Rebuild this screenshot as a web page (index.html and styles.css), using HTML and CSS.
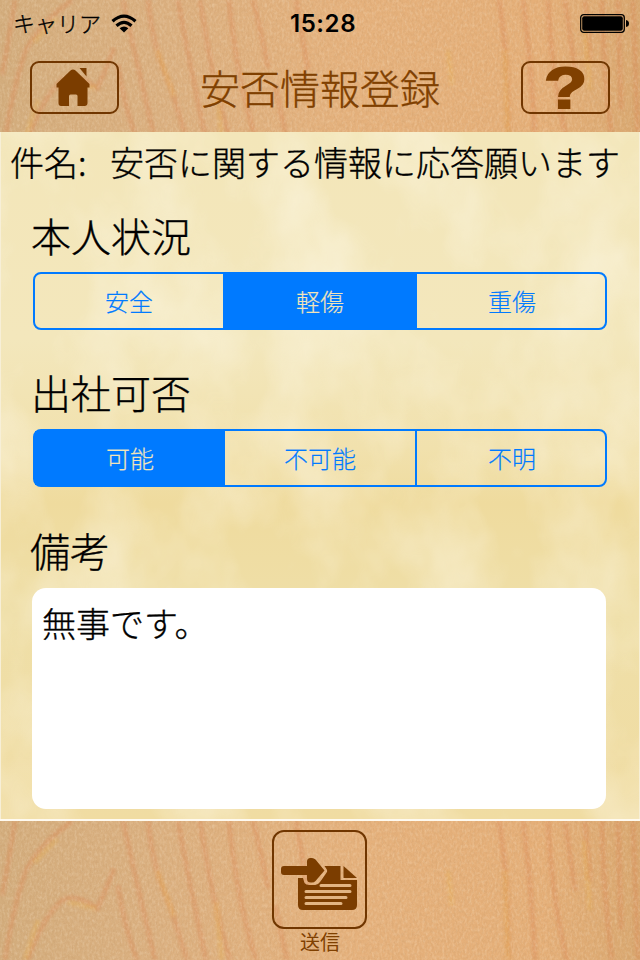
FILE: index.html
```
<!DOCTYPE html>
<html lang="ja">
  <head>
    <meta charset="UTF-8">
    <meta name="viewport" content="width=device-width, initial-scale=1.0">
    <title>安否情報登録</title>
    <link rel="stylesheet" href="styles.css">
  </head>
  <body>
    <!-- shared wood and paper textures -->
    <svg class="defs" width="0" height="0" aria-hidden="true">
      <defs>
        <linearGradient id="wood-base">
          <stop offset="0" stop-color="#d3ad7d"/>
          <stop offset="0.25" stop-color="#dbb080"/>
          <stop offset="0.55" stop-color="#e5b17c"/>
          <stop offset="0.85" stop-color="#e5af78"/>
          <stop offset="1" stop-color="#d9a870"/>
        </linearGradient>
        <filter id="soft" x="-5%" y="-5%" width="110%" height="110%">
          <feGaussianBlur stdDeviation="1.8"/>
        </filter>
        <filter id="wood-noise" x="0" y="0" width="100%" height="100%">
          <feTurbulence type="fractalNoise" baseFrequency="0.5 0.3" numOctaves="3" seed="4"/>
          <feColorMatrix values="0 0 0 0 0.5  0 0 0 0 0.28  0 0 0 0 0.12  1.5 0 0 0 -0.6"/>
        </filter>
        <filter id="wood-light" x="0" y="0" width="100%" height="100%">
          <feTurbulence type="fractalNoise" baseFrequency="0.4 0.25" numOctaves="3" seed="19"/>
          <feColorMatrix values="0 0 0 0 1  0 0 0 0 0.88  0 0 0 0 0.7  1.8 0 0 0 -0.75"/>
        </filter>
        <filter id="paper-light" x="0" y="0" width="100%" height="100%">
          <feTurbulence type="fractalNoise" baseFrequency="0.011 0.008" numOctaves="4" seed="31"/>
          <feColorMatrix values="0 0 0 0 1  0 0 0 0 0.97  0 0 0 0 0.88  2 0 0 0 -0.8"/>
        </filter>
        <symbol id="wood" viewBox="0 0 640 140">
          <rect width="640" height="140" fill="url(#wood-base)"/>
          <g fill="none" stroke="#da8a58" stroke-width="5" opacity="0.42" filter="url(#soft)">
            <path d="M15 0Q9 40 2 75M72 0Q38 25 25 52Q12 92 5 140"/>
            <path d="M114 48Q104 75 97 88Q75 72 62 80Q42 98 28 140"/>
            <path d="M118 65Q124 105 137 140M123 0Q135 55 155 140"/>
            <path d="M148 0Q153 50 170 85L187 140M178 0Q187 50 206 140"/>
            <path d="M200 0Q212 80 230 140M229 0Q236 75 256 140"/>
            <path d="M253 0Q263 40 268 68M275 85L287 140M296 0L308 70"/>
            <path d="M499 0Q509 60 508 140M523 0Q532 70 535 140"/>
            <path d="M548 0Q552 80 567 140M565 0L575 70M585 0L590 60"/>
            <path d="M602 0Q603 70 612 140M618 0L621 110M633 0L638 140"/>
          </g>
          <g fill="none" stroke="#e6b05a" stroke-width="5" opacity="0.4" filter="url(#soft)">
            <path d="M57 18L34 42M68 82L96 88M38 100L25 140M157 50L174 96"/>
            <path d="M216 82L222 140M505 50L508 140M584 20L590 90M448 50L452 85"/>
          </g>
          <rect width="640" height="140" filter="url(#wood-noise)" opacity="0.32"/>
          <rect width="640" height="140" filter="url(#wood-light)" opacity="0.28"/>
        </symbol>
      </defs>
    </svg>

    <header class="wood-bar top-bar">
      <svg class="texture" viewBox="0 0 640 132" preserveAspectRatio="none" aria-hidden="true">
        <use href="#wood" width="640" height="140"/>
      </svg>
      <div class="status">
        <div class="carrier">
          <span>キャリア</span>
          <svg width="26" height="20" viewBox="0 0 26 20" fill="none" stroke="#000" stroke-width="3.2">
            <path d="M1.500 7.2Q13-3 24.500 7.2"/>
            <path d="M5.500 11.8Q13 5 20.500 11.8"/>
            <path d="M13 18.5L8.6 14.3Q13 10.7 17.4 14.3Z" fill="#000" stroke="none"/>
          </svg>
        </div>
        <div class="time">15:28</div>
        <svg class="battery" width="50" height="20" viewBox="0 0 50 20">
          <rect x="0.7" y="0.7" width="43.6" height="17.6" rx="3" fill="none" stroke="#000" stroke-width="1.3"/>
          <rect x="2.2" y="2.2" width="40.6" height="14.6" rx="2"/>
          <path d="M46 6Q49 6.5 49 9.5Q49 12.5 46 13Z"/>
        </svg>
      </div>
      <div class="nav">
        <button class="nav-button home" aria-label="ホーム">
          <svg width="36" height="40" viewBox="0 0 36 40" fill="#7b3d00">
            <path d="M15.500 3.500Q18 1.500 20.500 3.500L34.500 17V20.500H32.500V36Q32.500 39 29.500 39H22.500V29Q22.500 27.500 21 27.500H15.500Q14 27.500 14 29V39H6Q3.500 39 3.500 36V20.500H1.500V17Z"/>
            <path d="M24.500 1H31.500V9.500Z"/>
          </svg>
        </button>
        <h1>安否情報登録</h1>
        <button class="nav-button"><span class="question">?</span></button>
      </div>
    </header>

    <main>
      <svg class="texture" viewBox="0 0 640 687" preserveAspectRatio="none" aria-hidden="true">
        <rect width="640" height="687" filter="url(#paper-light)" opacity="0.5"/>
      </svg>
      <div class="subject">
        <span class="subject-label">件名:</span>
        <span>安否に関する情報に応答願います</span>
      </div>

      <h2>本人状況</h2>
      <div class="segments status-segments">
        <button>安全</button>
        <button class="selected">軽傷</button>
        <button>重傷</button>
      </div>

      <h2>出社可否</h2>
      <div class="segments">
        <button class="selected">可能</button>
        <button>不可能</button>
        <button>不明</button>
      </div>

      <h2 class="note-title">備考</h2>
      <div class="note">無事です。</div>
    </main>

    <footer class="wood-bar bottom-bar">
      <svg class="texture" viewBox="0 0 640 140" preserveAspectRatio="none" aria-hidden="true">
        <use href="#wood" width="640" height="140"/>
      </svg>
      <button class="send" aria-label="送信">
        <svg width="78" height="54" viewBox="0 0 78 54" fill="#7b3d00">
          <path d="M17 21H22L23.500 26Q25 28 28 28H34Q37 28 39 25L45 16.500Q47 14 45.500 12L43.500 9H59.500V23H76V48Q76 53 71 53H22Q17 53 17 48Z"/>
          <path d="M62.500 9L76 21H62.500Z"/>
          <path d="M3 9H26V4.500Q26 1 29.500 1H31Q33 1 34.500 2.500L43.500 13.500L34.500 24Q33 25.500 31 25.500H30Q26 25.500 26 22V18H3Q0 18 0 15V12Q0 9 3 9Z"/>
          <path d="M40 28.500H69M25 34.500H69M25 40.500H65M25 46.500H60" fill="none" stroke="#e2b583" stroke-width="3" stroke-linecap="round"/>
        </svg>
      </button>
      <div class="send-label">送信</div>
    </footer>
  </body>
</html>
```

FILE: styles.css
```
* {
    box-sizing: border-box;
}
body {
    margin: 0;
    width: 640px;
    height: 960px;
    overflow: hidden;
    display: flex;
    flex-direction: column;
    font-family: "Noto Sans CJK JP", sans-serif;
    font-weight: 300;
    color: #000;
    -webkit-text-stroke: 0.35px;
}
h1, h2 {
    margin: 0;
    font-weight: 300;
    font-size: 40px;
    line-height: 60px;
}
button {
    font-family: inherit;
    font-weight: inherit;
    margin: 0;
    padding: 0;
    background: none;
    border: none;
}
.defs {
    position: absolute;
}
.texture {
    position: absolute;
    top: 0;
    left: 0;
    width: 100%;
    height: 100%;
    z-index: -1;
}
.wood-bar, main {
    position: relative;
    z-index: 0;
}

/* header */
.top-bar {
    height: 132px;
    box-shadow: inset 0 3px 1px rgba(240, 215, 190, 0.65), inset 2px 0 1px rgba(255, 240, 225, 0.5), inset 0 -2px 1px rgba(245, 205, 175, 0.6);
}
.status {
    display: grid;
    grid-template-columns: 1fr auto 1fr;
    align-items: center;
    height: 47px;
    padding: 0 10px 0 13px;
}
.carrier {
    display: flex;
    align-items: center;
    gap: 10px;
    font-size: 22px;
    line-height: 40px;
}
.carrier span {
    margin-top: -3px;
}
.time {
    font-family: Inter, sans-serif;
    font-size: 24px;
    font-weight: 600;
    letter-spacing: 0.6px;
    padding-left: 3px;
    -webkit-text-stroke: 0;
}
.battery {
    justify-self: end;
}
.nav {
    display: flex;
    justify-content: space-between;
    align-items: center;
    height: 81px;
    padding: 0 30px;
}
.nav h1 {
    margin-top: -2px;
    color: #804000;
}
.nav-button {
    display: flex;
    justify-content: center;
    align-items: center;
    width: 89px;
    height: 53px;
    border: 2px solid #703600;
    border-radius: 9px;
}
.home {
    padding: 0 3px 2px 0;
}
.question {
    font-family: "Liberation Sans", sans-serif;
    font-size: 58px;
    font-weight: bold;
    line-height: 50px;
    color: #804000;
    transform: scaleX(1.22);
    -webkit-text-stroke: 2px #804000;
}

/* form */
main {
    height: 687px;
    background: linear-gradient(#f3e6b9 0, #f3e7bc 30%, #f1e1ad 46%, #efdb9e 54%, #efdfa8 70%, #f0dca2 100%);
    border-left: 1px solid #f7efd7;
    border-right: 1px solid #f7efd7;
    padding: 0 32px 0 31px;
}
.subject {
    display: flex;
    height: 60px;
    margin: 0 -20px 0 -22px;
    font-size: 34px;
    line-height: 59px;
    white-space: nowrap;
}
.subject-label {
    width: 100px;
}
h2 {
    height: 60px;
    margin: 13px 0 7px -1px;
}
.segments {
    display: grid;
    grid-template-columns: 190px 192px 188px;
    width: 574px;
    height: 58px;
    margin: 0 0 0 1px;
    border: 2px solid #007aff;
    border-radius: 8px;
}
.status-segments {
    grid-template-columns: 188px 194px 188px;
}
.segments button {
    font-size: 24px;
    line-height: 54px;
    color: #007aff;
    -webkit-text-stroke: 0.2px;
}
.segments button:last-child {
    padding-left: 2px;
}
.segments .selected {
    background: #007aff;
    color: #f1e5b9;
}
.segments button:nth-child(2):not(.selected) {
    border-right: 2px solid #007aff;
}
.segments + h2 {
    margin-top: 32px;
    margin-bottom: 7px;
}
.segments + .note-title {
    margin-top: 33px;
    margin-bottom: 8px;
    margin-left: -2px;
}
.note {
    width: 574px;
    height: 221px;
    padding: 10px;
    background: #fff;
    border-radius: 14px;
    font-size: 34px;
    line-height: 50px;
}

/* footer */
.bottom-bar {
    display: flex;
    flex-direction: column;
    align-items: center;
    height: 141px;
    padding-top: 9px;
    border-top: 2px solid #fffaf0;
    box-shadow: inset 0 -8px 8px -5px rgba(130, 90, 60, 0.4), inset 2px 0 1px rgba(255, 240, 225, 0.5);
}
.send {
    display: flex;
    justify-content: center;
    align-items: center;
    width: 95px;
    height: 99px;
    margin-right: 1px;
    padding-top: 8px;
    border: 2px solid #703600;
    border-radius: 12px;
}
.send-label {
    font-size: 20px;
    line-height: 26px;
    font-weight: 400;
    color: #804000;
    -webkit-text-stroke: 0;
}
```
